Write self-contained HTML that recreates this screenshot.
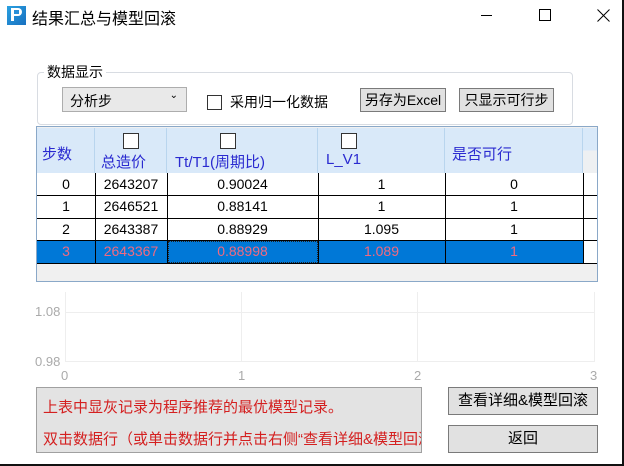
<!DOCTYPE html>
<html><head><meta charset="utf-8"><style>
*{margin:0;padding:0;box-sizing:border-box}
body{width:624px;height:466px;overflow:hidden;background:#fff;font-family:"Liberation Sans","Noto Sans CJK SC",sans-serif;position:relative;font-size:14px;color:#000}
.a{position:absolute}
.btn{position:absolute;background:#e1e1e1;border:1px solid #7a7a7a;text-align:center;font-size:14px}
.cb{position:absolute;width:16px;height:16px;border:1px solid #333;background:#fff}
.hd{position:absolute;top:128px;height:45px;background:#d9e9f9;border-right:1px solid #b9d5ee;color:#2a2ad0;font-size:15px}
.c{position:absolute;text-align:center;font-size:14px;line-height:21px}
</style></head><body>
<div class="a" style="right:0;top:0;width:2px;height:466px;background:#111"></div>
<div class="a" style="left:0;bottom:0;width:624px;height:2px;background:#111"></div>
<!-- icon -->
<div class="a" style="left:7px;top:6px;width:19px;height:19px;background:linear-gradient(135deg,#2aa0e0,#1870c0)"></div>
<div class="a" style="left:11px;top:8px;width:11px;height:8px;background:#fff;border-radius:0 5px 5px 0"></div>
<div class="a" style="left:14px;top:10px;width:5px;height:4px;background:#2a90d8"></div>
<div class="a" style="left:11px;top:15px;width:3px;height:6px;background:#fff"></div>
<div class="a" style="left:32px;top:5px;font-size:16px;">结果汇总与模型回滚</div>
<div class="a" style="left:481px;top:15px;width:11px;height:1px;background:#000"></div>
<div class="a" style="left:539px;top:9px;width:12px;height:12px;border:1px solid #000"></div>
<svg class="a" style="left:597px;top:9px" width="13" height="13"><path d="M0.5 0.5L12.5 12.5M12.5 0.5L0.5 12.5" stroke="#000" stroke-width="1"/></svg>
<!-- group -->
<div class="a" style="left:37px;top:72px;width:536px;height:53px;border:1px solid #d8dce2;border-radius:4px"></div>
<div class="a" style="left:44px;top:62px;background:#fff;padding:0 3px;font-size:14px">数据显示</div>
<div class="a" style="left:62px;top:87px;width:125px;height:25px;background:#e9e9e9;border:1px solid #adadad;padding:3px 7px;font-size:14px">分析步<span style="position:absolute;right:8px;top:2px;font-size:10px">⌄</span></div>
<div class="cb" style="left:207px;top:95px;width:15px;height:15px"></div>
<div class="a" style="left:230px;top:92px;font-size:14px">采用归一化数据</div>
<div class="btn" style="left:360px;top:88px;width:86px;height:24px;line-height:22px">另存为Excel</div>
<div class="btn" style="left:459px;top:88px;width:95px;height:24px;line-height:22px">只显示可行步</div>
<!-- grid -->
<div class="a" style="left:36px;top:126px;width:562px;height:156px;border:1px solid #8aa8c8;background:#f0f0f0"></div>
<div class="hd" style="left:37px;width:58px"><span class="a" style="left:5px;top:15px">步数</span></div>
<div class="hd" style="left:95px;width:72px"><div class="cb" style="left:28px;top:5px"></div><span class="a" style="left:6px;top:23px">总造价</span></div>
<div class="hd" style="left:167px;width:151px"><div class="cb" style="left:53px;top:5px"></div><span class="a" style="left:8px;top:23px">Tt/T1(周期比)</span></div>
<div class="hd" style="left:318px;width:127px"><div class="cb" style="left:23px;top:5px"></div><span class="a" style="left:8px;top:23px">L_V1</span></div>
<div class="hd" style="left:445px;width:138px"><span class="a" style="left:7px;top:15px">是否可行</span></div>
<div class="hd" style="left:583px;width:14px;border:none;background:linear-gradient(#d9e9f9 50%,#eef0f2 50%)"></div>
<div class="a" style="left:37px;top:173px;width:560px;height:91px;background:#fff"></div>
<div class="a" style="left:37px;top:241px;width:546px;height:22px;background:#0078d7"></div>
<div class="a" style="left:37px;top:195px;width:560px;height:1px;background:#000"></div>
<div class="a" style="left:37px;top:218px;width:560px;height:1px;background:#000"></div>
<div class="a" style="left:37px;top:240px;width:560px;height:1px;background:#000"></div>
<div class="a" style="left:37px;top:263px;width:560px;height:1px;background:#000"></div>
<div class="a" style="left:95px;top:173px;width:1px;height:91px;background:#000"></div>
<div class="a" style="left:167px;top:173px;width:1px;height:91px;background:#000"></div>
<div class="a" style="left:318px;top:173px;width:1px;height:91px;background:#000"></div>
<div class="a" style="left:445px;top:173px;width:1px;height:91px;background:#000"></div>
<div class="a" style="left:583px;top:173px;width:1px;height:91px;background:#000"></div>
<div class="a" style="left:168px;top:241px;width:150px;height:22px;border:1px dotted #222"></div>
<div class="c" style="left:37px;top:174px;width:58px">0</div><div class="c" style="left:95px;top:174px;width:72px">2643207</div><div class="c" style="left:167px;top:174px;width:151px">0.90024</div><div class="c" style="left:318px;top:174px;width:127px">1</div><div class="c" style="left:445px;top:174px;width:138px">0</div>
<div class="c" style="left:37px;top:196px;width:58px">1</div><div class="c" style="left:95px;top:196px;width:72px">2646521</div><div class="c" style="left:167px;top:196px;width:151px">0.88141</div><div class="c" style="left:318px;top:196px;width:127px">1</div><div class="c" style="left:445px;top:196px;width:138px">1</div>
<div class="c" style="left:37px;top:219px;width:58px">2</div><div class="c" style="left:95px;top:219px;width:72px">2643387</div><div class="c" style="left:167px;top:219px;width:151px">0.88929</div><div class="c" style="left:318px;top:219px;width:127px">1.095</div><div class="c" style="left:445px;top:219px;width:138px">1</div>
<div style="color:#f06a80"><div class="c" style="left:37px;top:241px;width:58px">3</div><div class="c" style="left:95px;top:241px;width:72px">2643367</div><div class="c" style="left:167px;top:241px;width:151px">0.88998</div><div class="c" style="left:318px;top:241px;width:127px">1.089</div><div class="c" style="left:445px;top:241px;width:138px">1</div></div>
<!-- chart -->
<div class="a" style="left:65px;top:292px;width:1px;height:70px;background:#eee"></div>
<div class="a" style="left:241px;top:292px;width:1px;height:70px;background:#eee"></div>
<div class="a" style="left:417px;top:292px;width:1px;height:70px;background:#eee"></div>
<div class="a" style="left:594px;top:292px;width:1px;height:70px;background:#eee"></div>
<div class="a" style="left:65px;top:312px;width:529px;height:1px;background:#eee"></div>
<div class="a" style="left:65px;top:361px;width:529px;height:1px;background:#eee"></div>
<div class="a" style="left:35px;top:304px;font-size:13px;color:#aaa">1.08</div>
<div class="a" style="left:35px;top:354px;font-size:13px;color:#aaa">0.98</div>
<div class="a" style="left:61px;top:368px;font-size:13px;color:#aaa">0</div>
<div class="a" style="left:238px;top:368px;font-size:13px;color:#aaa">1</div>
<div class="a" style="left:414px;top:368px;font-size:13px;color:#aaa">2</div>
<div class="a" style="left:590px;top:368px;font-size:13px;color:#aaa">3</div>
<!-- msg -->
<div class="a" style="left:36px;top:387px;width:386px;height:66px;background:#e3e3e3;border:1px solid #a0a0a0;overflow:hidden;color:#d42020;font-size:15px;white-space:nowrap">
<div class="a" style="left:6px;top:8px">上表中显灰记录为程序推荐的最优模型记录。</div>
<div class="a" style="left:6px;top:40px">双击数据行（或单击数据行并点击右侧“查看详细&amp;模型回滚”</div></div>
<div class="btn" style="left:448px;top:387px;width:150px;height:28px;line-height:26px;font-size:15px">查看详细&amp;模型回滚</div>
<div class="btn" style="left:448px;top:425px;width:150px;height:28px;line-height:26px;font-size:15px">返回</div>
</body></html>
